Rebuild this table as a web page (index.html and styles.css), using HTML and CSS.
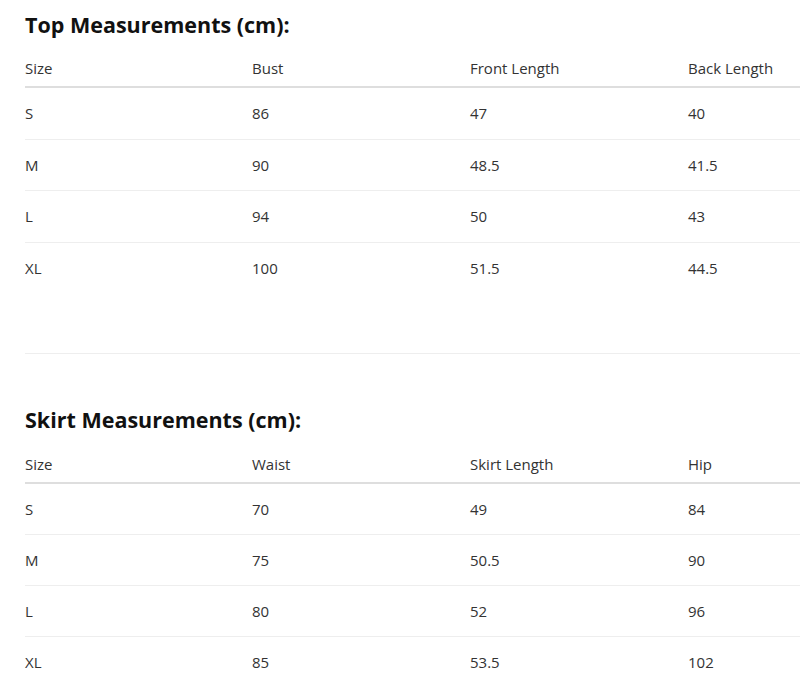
FILE: index.html
```html
<!DOCTYPE html>
<html>
<head>
<meta charset="utf-8">
<link rel="stylesheet" href="styles.css">
</head>
<body>
<div class="page">
  <section class="block first">
    <h2 class="title">Top Measurements (cm):</h2>
    <table class="sizes">
      <colgroup><col class="c1"><col class="c2"><col class="c3"><col class="c4"></colgroup>
      <thead>
        <tr><th>Size</th><th>Bust</th><th>Front Length</th><th>Back Length</th></tr>
      </thead>
      <tbody>
        <tr><td>S</td><td>86</td><td>47</td><td>40</td></tr>
        <tr><td>M</td><td>90</td><td>48.5</td><td>41.5</td></tr>
        <tr><td>L</td><td>94</td><td>50</td><td>43</td></tr>
        <tr><td>XL</td><td>100</td><td>51.5</td><td>44.5</td></tr>
      </tbody>
    </table>
  </section>
  <hr class="divider">
  <section class="block second">
    <h2 class="title">Skirt Measurements (cm):</h2>
    <table class="sizes">
      <colgroup><col class="c1"><col class="c2"><col class="c3"><col class="c4"></colgroup>
      <thead>
        <tr><th>Size</th><th>Waist</th><th>Skirt Length</th><th>Hip</th></tr>
      </thead>
      <tbody>
        <tr><td>S</td><td>70</td><td>49</td><td>84</td></tr>
        <tr><td>M</td><td>75</td><td>50.5</td><td>90</td></tr>
        <tr><td>L</td><td>80</td><td>52</td><td>96</td></tr>
        <tr><td>XL</td><td>85</td><td>53.5</td><td>102</td></tr>
      </tbody>
    </table>
  </section>
</div>
</body>
</html>
```

FILE: styles.css
```css
html, body {
  margin: 0;
  padding: 0;
  background: #fff;
}
body {
  font-family: "Open Sans", "Noto Sans", "Liberation Sans", sans-serif;
  color: #333;
  overflow: hidden;
}
.page {
  padding-left: 25px;
}
.title {
  margin: 0;
  padding-top: 11px;
  font-size: 21.5px;
  line-height: 28px;
  font-weight: 700;
  color: #111;
}
.second .title {
  padding-top: 0;
}
.sizes {
  margin-top: 10px;
  width: 775px;
  border-collapse: collapse;
  table-layout: fixed;
  font-size: 15px;
}
.second .sizes {
  margin-top: 11px;
}
.c1 { width: 227px; }
.c2 { width: 218px; }
.c3 { width: 218px; }
.c4 { width: 112px; }
.sizes th {
  text-align: left;
  font-weight: 500;
  padding: 9px 0 8px;
  line-height: 20px;
  border-bottom: 2px solid #dedede;
}
.sizes td {
  padding: 15px 0;
  line-height: 20px;
  border-bottom: 1px solid #eeeeee;
}
.first .sizes td {
  padding-bottom: 15.6px;
}
.sizes tbody tr:last-child td {
  border-bottom: none;
}
.divider {
  border: none;
  border-top: 1px solid #eeeeee;
  margin: 60px 0 52px;
}
```
